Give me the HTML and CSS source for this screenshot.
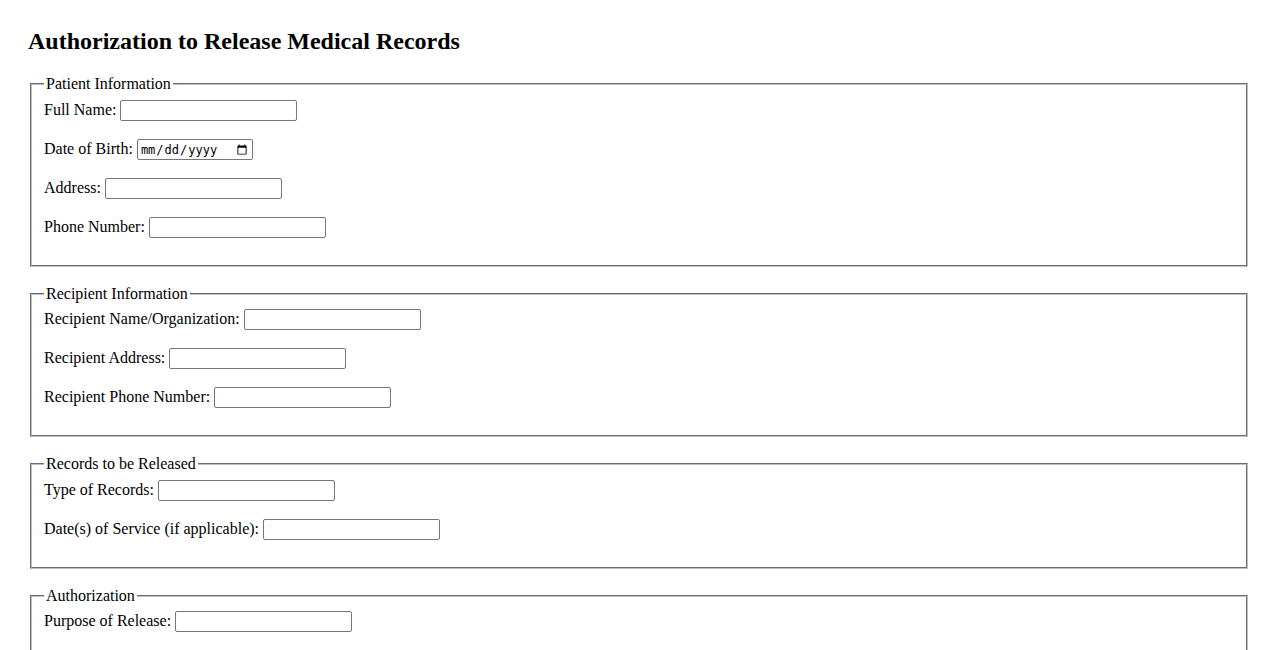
FILE: index.html
```html
<!DOCTYPE html>
<html lang="en">
<head>
<meta charset="utf-8">
<title>Authorization to Release Medical Records</title>
<link rel="stylesheet" href="styles.css">
</head>
<body>
<div class="page">
  <h2 class="title">Authorization to Release Medical Records</h2>
  <form class="form">
    <fieldset class="section">
      <legend class="section-legend">Patient Information</legend>
      <div class="row"><label for="name">Full Name:</label> <input class="field" type="text" id="name"></div>
      <div class="row"><label for="dob">Date of Birth:</label> <input class="field field-date" type="date" id="dob"></div>
      <div class="row"><label for="addr">Address:</label> <input class="field" type="text" id="addr"></div>
      <div class="row"><label for="phone">Phone Number:</label> <input class="field" type="tel" id="phone"></div>
    </fieldset>
    <fieldset class="section">
      <legend class="section-legend">Recipient Information</legend>
      <div class="row"><label for="rname">Recipient Name/Organization:</label> <input class="field" type="text" id="rname"></div>
      <div class="row"><label for="raddr">Recipient Address:</label> <input class="field" type="text" id="raddr"></div>
      <div class="row"><label for="rphone">Recipient Phone Number:</label> <input class="field" type="tel" id="rphone"></div>
    </fieldset>
    <fieldset class="section">
      <legend class="section-legend">Records to be Released</legend>
      <div class="row"><label for="type">Type of Records:</label> <input class="field" type="text" id="type"></div>
      <div class="row"><label for="dates">Date(s) of Service (if applicable):</label> <input class="field" type="text" id="dates"></div>
    </fieldset>
    <fieldset class="section">
      <legend class="section-legend">Authorization</legend>
      <div class="row"><label for="purpose">Purpose of Release:</label> <input class="field" type="text" id="purpose"></div>
      <div class="row"><label for="exp">Expiration Date:</label> <input class="field field-date" type="date" id="exp"></div>
      <div class="row"><label for="sig">Signature:</label> <input class="field" type="text" id="sig"></div>
    </fieldset>
  </form>
</div>
</body>
</html>
```
FILE: styles.css
```css
html, body {
  margin: 0;
  padding: 0;
  background: #ffffff;
}
body {
  font-family: "Liberation Serif", "Times New Roman", serif;
  font-size: 16px;
  color: #000000;
}
.page {
  padding: 28px 28px 28px 28px;
}
.title {
  font-size: 24px;
  font-weight: bold;
  margin: 0 0 20px 0;
}
.form {
  margin: 0;
}
.section {
  margin: 0 2px 18px 2px;
  padding: 4.6px 12px 11px 12px;
  border: 2px groove rgb(192, 192, 192);
  min-width: 0;
}
.section-legend {
  padding: 0 2px;
}
.row {
  margin-bottom: 16px;
  line-height: 23px;
  height: 23px;
}
.field {
  box-sizing: border-box;
  width: 177px;
  height: 21px;
  padding: 1px 2px;
  border: 1px solid #767676;
  border-radius: 2px;
  font-family: "Liberation Sans", Arial, sans-serif;
  font-size: 13.33px;
  vertical-align: baseline;
  background: #ffffff;
}
.field-date {
  width: 116px;
  font-family: "DejaVu Sans Mono", "Liberation Mono", monospace;
  font-size: 12px;
}
```
